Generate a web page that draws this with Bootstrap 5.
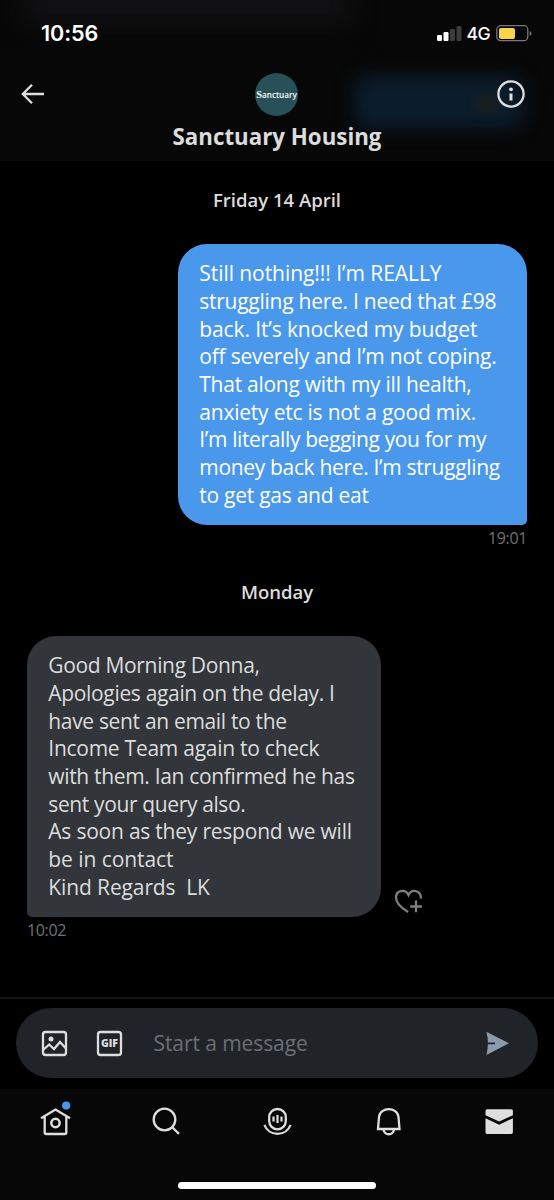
<!doctype html>
<html lang="en">
<head>
<meta charset="utf-8">
<meta name="viewport" content="width=device-width, initial-scale=1">
<title>Sanctuary Housing</title>
<link href="https://cdn.jsdelivr.net/npm/bootstrap@5.3.0/dist/css/bootstrap.min.css" rel="stylesheet">
<style>
body{background:#000;color:#e1e1e1;font-family:"Open Sans","Noto Sans",sans-serif;height:1200px;overflow:hidden}
svg{display:block;flex:none}
.ink{fill:none;stroke:#dedede;stroke-width:2.3}
.top-bar{height:161px;background:#070707}
.glow{position:absolute;left:354px;top:76px;width:170px;height:52px;border-radius:14px;background:#0b1d2d;filter:blur(9px)}
.glow-warm{position:absolute;left:476px;top:94px;width:22px;height:20px;border-radius:50%;background:#1a1e1c;filter:blur(5px)}
.glow-grey{position:absolute;left:26px;top:-20px;width:326px;height:44px;background:#111113;filter:blur(12px)}
.status{height:68px;padding:0 22px 0 41px;font-family:Inter,sans-serif;color:#fff}
.clock{font-size:21.6px;font-weight:600;line-height:67px;letter-spacing:-.1px}
.net{font-size:17.6px;font-weight:500;line-height:67px;letter-spacing:-.6px;margin:0 6px 0 5px}
.title-row{height:52px;padding:0 21px 0 20px}
.avatar{width:43px;height:43px;border-radius:50%;background:#275058;font:600 8.1px/43px "Open Sans",sans-serif;color:#fff;white-space:nowrap}
.avatar b{font:700 10.5px "Liberation Serif",serif}
.who{font-size:22.3px;font-weight:700;line-height:34px;color:#dcdcdc;margin:0}
.day{font-size:18.5px;font-weight:600;line-height:26px;color:#dcdcdc}
.bubble{height:281px;padding:16.4px 0 0 21.3px;font-size:21px;line-height:27.66px}
.bubble span{display:block;white-space:pre}
.sent{width:349px;background:#4a98eb;color:#fff;border-radius:29px 29px 5px 29px;margin:31px 27px 0 0}
.received{width:354px;background:#323539;color:#dcdcdc;border-radius:29px 29px 29px 5px;margin-left:27px}
.stamp{font-size:16px;line-height:22px;letter-spacing:-.35px;color:#707376;padding:1.5px 27px 0}
.k0{letter-spacing:-.06px}.k1{letter-spacing:-.12px}.k2{letter-spacing:-.22px}.k3{letter-spacing:-.26px}.k4{letter-spacing:-.33px}.k5{letter-spacing:-.37px}.kp{letter-spacing:-.06px}
.thread{height:836px;padding-top:26px}
.monday{margin-top:30.5px;margin-bottom:31px}
.compose{height:92px;border-top:2px solid #131415;padding:9px 16px 0}
.field{height:70px;background:#202328;border-radius:35px;padding:0 28px 0 25px}
.hint{font-size:21px;line-height:30px;color:#6c7074;letter-spacing:-.08px;margin-left:6.5px}
.tabs{height:111px;background:#070707;padding:12px 35px 0}
.home-bar{width:198px;height:7px;border-radius:4px;background:#fff;margin-top:41px}
</style>
</head>
<body>
<header class="top-bar position-relative overflow-hidden">
  <div class="glow-grey"></div><div class="glow"></div><div class="glow-warm"></div>
  <div class="position-relative">
    <div class="status d-flex justify-content-between">
      <div class="clock">10:56</div>
      <div class="d-flex">
        <svg width="26" height="66" fill="#fff"><rect x="1" y="35" width="5" height="6" rx="1.2"/><rect x="7.5" y="32" width="5" height="9" rx="1.2"/><g fill="#3b3b3b"><rect x="14" y="29" width="5" height="12" rx="1.2"/><rect x="20.5" y="26" width="5" height="15" rx="1.2"/></g></svg>
        <div class="net">4G</div>
        <svg width="36" height="66"><rect x=".8" y="25.7" width="31" height="15" rx="4" fill="none" stroke="#77777b" stroke-width="1.3"/><rect x="3" y="28" width="16" height="11" rx="2" fill="#f8d548"/><path d="M33.7 31v5q1.8-.6 1.8-2.5T33.7 31z" fill="#77777b"/></svg>
      </div>
    </div>
    <div class="title-row d-flex align-items-center justify-content-between">
      <svg width="40" height="26" viewBox="0 0 40 26" class="ink"><path d="M12 3.7 2.8 13l9.2 9.3M2.8 13H24"/></svg>
      <div class="avatar text-center"><b>S</b>anctuary</div>
      <svg width="40" height="30" viewBox="-2 0 40 30" class="ink"><circle cx="16" cy="15" r="12.6"/><circle cx="16" cy="10.3" r="1.9" fill="#dedede" stroke="none"/><path d="M16 14.500v7" stroke-width="3"/></svg>
    </div>
    <h1 class="who text-center">Sanctuary Housing</h1>
  </div>
</header>

<main class="thread">
  <div class="day text-center">Friday 14 April</div>
  <div class="sent bubble ms-auto"><span class="k0">Still nothing!!! I’m REALLY</span><span class="k3">struggling here. I need that £98</span><span class="k1">back. It’s knocked my budget</span><span class="k2">off severely and I’m not coping.</span><span class="k3">That along with my ill health,</span><span class="k2">anxiety etc is not a good mix.</span><span class="k5">I’m literally begging you for my</span><span class="k4">money back here. I’m struggling</span><span class="k3">to get gas and eat</span></div>
  <div class="stamp text-end">19:01</div>
  <div class="day monday text-center">Monday</div>
  <div class="d-flex align-items-end">
    <div class="received bubble"><span class="k4">Good Morning Donna,</span><span class="k4">Apologies again on the delay. I</span><span class="k4">have sent an email to the</span><span class="k3">Income Team again to check</span><span class="k4">with them. Ian confirmed he has</span><span class="k5">sent your query also.</span><span class="k2">As soon as they respond we will</span><span class="kp">be in contact</span><span class="k1">Kind Regards  LK</span></div>
    <svg class="ms-2" width="40" height="34" viewBox="389 883 40 34" fill="none" stroke="#7d7f81" stroke-width="2.3"><path d="M408.2 912C401.500 908.200 396 903 396 897.300C396 890 405.500 888.600 408.500 895C411.500 888.600 420.800 890 421 898.500M416 900.500V912.200M410.200 906.500H422"/></svg>
  </div>
  <div class="stamp">10:02</div>
</main>

<section class="compose">
  <div class="field d-flex align-items-center">
    <svg width="27" height="27" viewBox="0 0 27 27" class="ink"><rect x="2" y="2" width="23" height="23" rx="2.5"/><circle cx="10" cy="9" r="2.5" fill="#dedede" stroke="none"/><path d="m2 20 6.200-5.500 4.800 4.500 6-7L25 18.500"/></svg>
    <svg class="ms-4 me-4" width="31" height="27" viewBox="-4 0 31 27"><rect class="ink" x="2" y="2" width="23" height="23" rx="2.500"/><text x="13.500" y="17.300" text-anchor="middle" font-family="Open Sans" font-weight="800" font-size="10.500" fill="#dedede" textLength="17" lengthAdjust="spacingAndGlyphs">GIF</text></svg>
    <div class="hint">Start a message</div>
    <svg class="ms-auto" width="25" height="27" viewBox="0 0 25 27"><path d="M1.400 1.800 24 13.300 1.400 25Q3 18 2.800 14.200H10V12.400H2.800Q3 8 1.400 1.800z" fill="#8b9bae"/></svg>
  </div>
</section>

<nav class="tabs">
  <div class="d-flex justify-content-between">
    <svg width="42" height="40" viewBox="35 1101 42 40" class="ink"><path d="M41 1118.300 55.500 1109.500 70 1118.300M44.700 1117v15.500q0 1.500 1.500 1.500h18.600q1.500 0 1.500-1.500V1117"/><circle cx="55.500" cy="1123" r="4.200" stroke-width="2.500"/><circle cx="66.200" cy="1105.600" r="4.100" fill="#4a98eb" stroke="none"/></svg>
    <svg width="42" height="40" viewBox="146 1101 42 40" class="ink"><circle cx="164.500" cy="1119.500" r="10.800"/><path d="m172.500 1127.500 6.500 6.300"/></svg>
    <svg width="42" height="40" viewBox="256.500 1101 42 40" class="ink"><rect x="269.700" y="1109" width="16.600" height="20.300" rx="8.200"/><path d="M264.900 1124.800A14 14 0 0 0 291.100 1124.800M274 1116.500v5M278 1115v8M282 1116.500v5" stroke-width="2.200"/></svg>
    <svg width="42" height="40" viewBox="367 1101 42 40" class="ink"><path d="M378 1129 379 1117C380 1106.500 397.500 1106.500 398.500 1117L399.500 1129zM383.500 1130C385 1135.700 392.500 1135.700 394 1130"/></svg>
    <svg width="42" height="40" viewBox="477 1101 42 40" fill="#dedede"><path d="M485.500 1115.200V1110.800q0-1.600 1.600-1.600h24.200q1.600 0 1.600 1.600v4.400L499.200 1121.600z"/><path d="M485.500 1118.200 499.200 1124.700 512.900 1118.200V1132.300q0 1.600-1.600 1.600h-24.200q-1.600 0-1.600-1.600z"/></svg>
  </div>
  <div class="home-bar mx-auto"></div>
</nav>
<script src="https://cdn.jsdelivr.net/npm/bootstrap@5.3.0/dist/js/bootstrap.bundle.min.js"></script>
</body>
</html>
